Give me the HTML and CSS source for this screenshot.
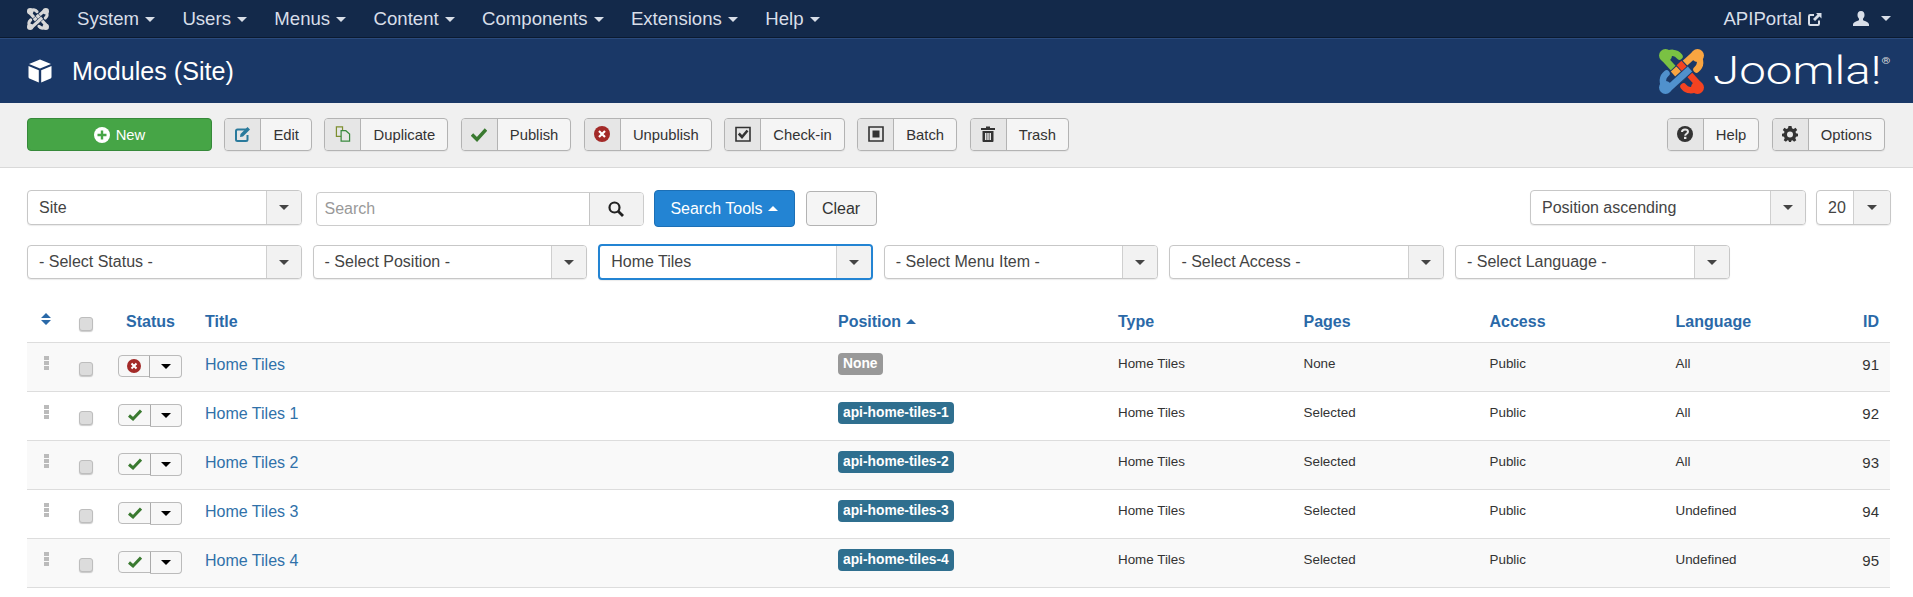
FILE: index.html
```html
<!DOCTYPE html>
<html lang="en">
<head>
<meta charset="utf-8">
<title>Modules (Site)</title>
<link rel="stylesheet" href="styles.css">
</head>
<body>
<svg class="defs" width="0" height="0" aria-hidden="true">
  <symbol id="piece" viewBox="0 0 45 45">
    <path class="pc-hook" d="M7 7 C11 2.500 17 3 20.500 7.500"/>
    <path class="pc-gap" d="M9 14 L25 31"/>
    <path class="pc-band" d="M5 9 L25 31"/>
    <circle class="pc-dot" cx="6.500" cy="6.500" r="6.500"/>
  </symbol>
</svg>
<nav class="topnav">
  <svg class="navlogo" viewBox="0 0 45 45">
    <g class="logo-white">
      <use href="#piece"/>
      <use href="#piece" transform="rotate(90 22.5 22.5)"/>
      <use href="#piece" transform="rotate(180 22.5 22.5)"/>
      <use href="#piece" transform="rotate(270 22.5 22.5)"/>
    </g>
  </svg>
  <ul class="navmenu">
    <li>System<i class="caret"></i></li>
    <li>Users<i class="caret"></i></li>
    <li>Menus<i class="caret"></i></li>
    <li>Content<i class="caret"></i></li>
    <li>Components<i class="caret"></i></li>
    <li>Extensions<i class="caret"></i></li>
    <li>Help<i class="caret"></i></li>
  </ul>
  <div class="navright">
    <span class="portal">APIPortal
      <svg class="exticon" viewBox="0 0 14 14"><path d="M6 3H2.2C1.5 3 1 3.500 1 4.200V11.800C1 12.500 1.500 13 2.200 13H9.800C10.500 13 11 12.500 11 11.800V8.500" fill="none" stroke="currentColor" stroke-width="2"/><path d="M8 1H13.500V6.500L11.500 4.500L7 9L5 7L9.500 2.500Z" fill="currentColor"/></svg>
    </span>
    <svg class="usericon" viewBox="0 0 16 15"><path d="M8 0C5.500 0 4.300 2 4.500 4.300C4.600 6 5.300 7 6 7.800V9.300C4 10.300 0.500 10.800 0 13.500V15H16V13.500C15.500 10.800 12 10.300 10 9.300V7.800C10.700 7 11.400 6 11.500 4.300C11.700 2 10.500 0 8 0Z" fill="currentColor"/></svg>
    <i class="caret"></i>
  </div>
</nav>
<header class="titlebar">
  <svg class="cube" viewBox="0 0 24 24"><path d="M12 0.500L23 5L12 9.500L1 5Z M0.500 7L10.800 11.200V23.500L2 19.800C1 19.400 0.500 18.800 0.500 17.800Z M23.500 7V17.800C23.500 18.800 23 19.400 22 19.800L13.200 23.500V11.200Z" fill="#fff"/></svg>
  <h1 class="pagetitle">Modules (Site)</h1>
  <div class="brand">
    <svg class="brandmark" viewBox="0 0 45 45">
      <use class="pc-green" href="#piece"/>
      <use class="pc-orange" href="#piece" transform="rotate(90 22.5 22.5)"/>
      <use class="pc-red" href="#piece" transform="rotate(180 22.5 22.5)"/>
      <use class="pc-blue" href="#piece" transform="rotate(270 22.5 22.5)"/>
    </svg>
    <span class="wordmark">Joomla!<sup class="reg">®</sup></span>
  </div>
</header>
<div class="toolbar">
  <button class="btn-new"><svg class="newicon" viewBox="0 0 16 16"><circle cx="8" cy="8" r="8" fill="#fff"/><path d="M8 3.500V12.500M3.500 8H12.500" stroke="#46a546" stroke-width="2.400"/></svg>New</button>
  <div class="tbtn"><span class="tico"><svg viewBox="0 0 16 16"><path d="M12 3.500H2.500C1.700 3.500 1 4.200 1 5V13.500C1 14.300 1.700 15 2.500 15H11C11.800 15 12.500 14.300 12.500 13.500V9" fill="none" stroke="#2a7a9c" stroke-width="2"/><path d="M5.500 8L12.500 1L15 3.500L8 10.500L5 11Z" fill="#2a7a9c"/></svg></span><span class="tlabel">Edit</span></div>
  <div class="tbtn"><span class="tico"><svg viewBox="0 0 16 17"><path d="M1 1H7.500V11H1Z" fill="none" stroke="#7d8f2f" stroke-width="1.300"/><path d="M6 5H11L15 8.500V16H6Z" fill="#e6e6e6" stroke="#3a8a3f" stroke-width="1.300"/></svg></span><span class="tlabel">Duplicate</span></div>
  <div class="tbtn"><span class="tico"><svg viewBox="0 0 16 14"><path d="M1 7.500L6 12.500L15 2.500" fill="none" stroke="#3a7a30" stroke-width="3.400"/></svg></span><span class="tlabel">Publish</span></div>
  <div class="tbtn"><span class="tico"><svg viewBox="0 0 16 16"><circle cx="8" cy="8" r="8" fill="#a32a28"/><path d="M5 5L11 11M11 5L5 11" stroke="#fff" stroke-width="2.200"/></svg></span><span class="tlabel">Unpublish</span></div>
  <div class="tbtn"><span class="tico"><svg viewBox="0 0 16 16"><path d="M1 1.500H15V15H1Z" fill="none" stroke="#333" stroke-width="1.600"/><path d="M3.800 7.500L7 11L12.500 4.500" fill="none" stroke="#333" stroke-width="2.600"/></svg></span><span class="tlabel">Check-in</span></div>
  <div class="tbtn"><span class="tico"><svg viewBox="0 0 16 16"><path d="M1 1H15V15H1Z" fill="none" stroke="#333" stroke-width="1.600"/><rect x="4.500" y="4.500" width="7" height="7" fill="#333"/></svg></span><span class="tlabel">Batch</span></div>
  <div class="tbtn"><span class="tico"><svg viewBox="0 0 16 16"><path d="M6 0.500H10V2H15V4H1V2H6Z" fill="#333"/><path d="M2.500 5H13.500V15C13.500 15.600 13 16 12.500 16H3.500C3 16 2.500 15.600 2.500 15Z M5 7V14H6.500V7Z M7.250 7V14H8.750V7Z M9.500 7V14H11V7Z" fill="#333" fill-rule="evenodd"/></svg></span><span class="tlabel">Trash</span></div>
  <div class="tbtn push"><span class="tico"><svg viewBox="0 0 16 16"><circle cx="8" cy="8" r="8" fill="#333"/><path d="M5 6C5 4.200 6.500 3.400 8 3.400C9.700 3.400 11 4.300 11 5.800C11 7.800 8.200 7.700 8.200 9.700" fill="none" stroke="#e6e6e6" stroke-width="2"/><rect x="7" y="10.800" width="2.400" height="2.200" fill="#e6e6e6"/></svg></span><span class="tlabel">Help</span></div>
  <div class="tbtn"><span class="tico"><svg viewBox="0 0 16 16"><path fill-rule="evenodd" fill="#333" d="M6.500 0H9.500L10 2.300L11.600 3L13.600 1.800L15.200 4.100L13.500 5.700L14 7.200L16 7.800V10.200L14 10.800L13.300 12.300L14.300 14.300L12.100 15.800L10.500 14.300L9.500 14.600L9 16H7L6.500 14.600L5.500 14.300L3.900 15.800L1.700 14.300L2.700 12.300L2 10.800L0 10.200V7.800L2 7.200L2.500 5.700L0.800 4.100L2.400 1.800L4.400 3L6 2.300Z M8 5.500A3 3 0 1 0 8 11.500A3 3 0 1 0 8 5.500Z"/></svg></span><span class="tlabel">Options</span></div>
</div>
<main class="content">
  <div class="filterbar">
    <div class="select w-site"><span class="val">Site</span><span class="arrow"><i class="caret dark"></i></span></div>
    <div class="searchbox">
      <span class="searchinput">Search</span>
      <span class="searchbtn"><svg viewBox="0 0 16 16"><circle cx="6.500" cy="6.500" r="5" fill="none" stroke="#222" stroke-width="2.200"/><path d="M10.200 10.200L15 15" stroke="#222" stroke-width="2.800"/></svg></span>
    </div>
    <button class="btn-tools">Search Tools<i class="caret up"></i></button>
    <button class="btn-clear">Clear</button>
    <div class="select w-sort push"><span class="val">Position ascending</span><span class="arrow"><i class="caret dark"></i></span></div>
    <div class="select w-limit"><span class="val">20</span><span class="arrow"><i class="caret dark"></i></span></div>
  </div>
  <div class="filterrow">
    <div class="select"><span class="val">- Select Status -</span><span class="arrow"><i class="caret dark"></i></span></div>
    <div class="select"><span class="val">- Select Position -</span><span class="arrow"><i class="caret dark"></i></span></div>
    <div class="select focused"><span class="val">Home Tiles</span><span class="arrow"><i class="caret dark"></i></span></div>
    <div class="select"><span class="val">- Select Menu Item -</span><span class="arrow"><i class="caret dark"></i></span></div>
    <div class="select"><span class="val">- Select Access -</span><span class="arrow"><i class="caret dark"></i></span></div>
    <div class="select"><span class="val">- Select Language -</span><span class="arrow"><i class="caret dark"></i></span></div>
  </div>
  <table class="list">
    <colgroup>
      <col class="c-sort"><col class="c-check"><col class="c-status"><col class="c-title"><col class="c-pos"><col class="c-type"><col class="c-pages"><col class="c-access"><col class="c-lang"><col class="c-id">
    </colgroup>
    <thead>
      <tr>
        <th><svg class="sorticon" viewBox="0 0 10 12"><path d="M5 0L10 5H0Z M0 7H10L5 12Z" fill="#2a69a8"/></svg></th>
        <th><input class="cb" type="checkbox"></th>
        <th class="ctr">Status</th>
        <th>Title</th>
        <th>Position<i class="caret up blue"></i></th>
        <th>Type</th>
        <th>Pages</th>
        <th>Access</th>
        <th>Language</th>
        <th class="right">ID</th>
      </tr>
    </thead>
    <tbody>
      <tr>
        <td class="dragcell"><svg class="drag" viewBox="0 0 5 14"><path d="M0 0H5V4H0Z M0 5H5V9H0Z M0 10H5V14H0Z" fill="#bbb"/></svg></td>
        <td class="checkcell"><input class="cb" type="checkbox"></td>
        <td class="statuscell"><div class="status"><span class="st-main wide"><svg viewBox="0 0 14 14"><circle cx="7" cy="7" r="7" fill="#a32a28"/><path d="M4.500 4.500L9.500 9.500M9.500 4.500L4.500 9.500" stroke="#fff" stroke-width="2"/></svg></span><span class="st-drop"><i class="caret black"></i></span></div></td>
        <td class="titlecell"><a class="tlink">Home Tiles</a></td>
        <td class="badgecell"><span class="badge none">None</span></td>
        <td class="sm">Home Tiles</td><td class="sm">None</td><td class="sm">Public</td><td class="sm">All</td><td class="idcell">91</td>
      </tr>
      <tr>
        <td class="dragcell"><svg class="drag" viewBox="0 0 5 14"><path d="M0 0H5V4H0Z M0 5H5V9H0Z M0 10H5V14H0Z" fill="#bbb"/></svg></td>
        <td class="checkcell"><input class="cb" type="checkbox"></td>
        <td class="statuscell"><div class="status"><span class="st-main"><svg viewBox="0 0 14 12"><path d="M1 6.500L5 10L13 1.500" fill="none" stroke="#3a7a30" stroke-width="3"/></svg></span><span class="st-drop"><i class="caret black"></i></span></div></td>
        <td class="titlecell"><a class="tlink">Home Tiles 1</a></td>
        <td class="badgecell"><span class="badge">api-home-tiles-1</span></td>
        <td class="sm">Home Tiles</td><td class="sm">Selected</td><td class="sm">Public</td><td class="sm">All</td><td class="idcell">92</td>
      </tr>
      <tr>
        <td class="dragcell"><svg class="drag" viewBox="0 0 5 14"><path d="M0 0H5V4H0Z M0 5H5V9H0Z M0 10H5V14H0Z" fill="#bbb"/></svg></td>
        <td class="checkcell"><input class="cb" type="checkbox"></td>
        <td class="statuscell"><div class="status"><span class="st-main"><svg viewBox="0 0 14 12"><path d="M1 6.500L5 10L13 1.500" fill="none" stroke="#3a7a30" stroke-width="3"/></svg></span><span class="st-drop"><i class="caret black"></i></span></div></td>
        <td class="titlecell"><a class="tlink">Home Tiles 2</a></td>
        <td class="badgecell"><span class="badge">api-home-tiles-2</span></td>
        <td class="sm">Home Tiles</td><td class="sm">Selected</td><td class="sm">Public</td><td class="sm">All</td><td class="idcell">93</td>
      </tr>
      <tr>
        <td class="dragcell"><svg class="drag" viewBox="0 0 5 14"><path d="M0 0H5V4H0Z M0 5H5V9H0Z M0 10H5V14H0Z" fill="#bbb"/></svg></td>
        <td class="checkcell"><input class="cb" type="checkbox"></td>
        <td class="statuscell"><div class="status"><span class="st-main"><svg viewBox="0 0 14 12"><path d="M1 6.500L5 10L13 1.500" fill="none" stroke="#3a7a30" stroke-width="3"/></svg></span><span class="st-drop"><i class="caret black"></i></span></div></td>
        <td class="titlecell"><a class="tlink">Home Tiles 3</a></td>
        <td class="badgecell"><span class="badge">api-home-tiles-3</span></td>
        <td class="sm">Home Tiles</td><td class="sm">Selected</td><td class="sm">Public</td><td class="sm">Undefined</td><td class="idcell">94</td>
      </tr>
      <tr>
        <td class="dragcell"><svg class="drag" viewBox="0 0 5 14"><path d="M0 0H5V4H0Z M0 5H5V9H0Z M0 10H5V14H0Z" fill="#bbb"/></svg></td>
        <td class="checkcell"><input class="cb" type="checkbox"></td>
        <td class="statuscell"><div class="status"><span class="st-main"><svg viewBox="0 0 14 12"><path d="M1 6.500L5 10L13 1.500" fill="none" stroke="#3a7a30" stroke-width="3"/></svg></span><span class="st-drop"><i class="caret black"></i></span></div></td>
        <td class="titlecell"><a class="tlink">Home Tiles 4</a></td>
        <td class="badgecell"><span class="badge">api-home-tiles-4</span></td>
        <td class="sm">Home Tiles</td><td class="sm">Selected</td><td class="sm">Public</td><td class="sm">Undefined</td><td class="idcell">95</td>
      </tr>
    </tbody>
  </table>
</main>
</body>
</html>
```
FILE: styles.css
```css
* { box-sizing: border-box; }
html, body { margin: 0; padding: 0; }
body {
  font-family: "Liberation Sans", Arial, sans-serif;
  font-size: 16px;
  color: #333;
  background: #fff;
  overflow: hidden;
}
.defs { position: absolute; }
.caret {
  display: inline-block;
  width: 0;
  height: 0;
  margin-left: 6px;
  vertical-align: middle;
  border-left: 5px solid transparent;
  border-right: 5px solid transparent;
  border-top: 5px solid currentColor;
}
.caret.up { border-top: 0; border-bottom: 5px solid currentColor; }
.caret.dark { margin: 0; color: #444; }
.caret.black { margin: 0; color: #000; }
.caret.blue { color: #2a69a8; }

/* top navigation */
.topnav {
  height: 38px;
  display: flex;
  align-items: center;
  padding: 0 22px 0 27px;
  background: #13294a;
  border-bottom: 1px solid #0b1a30;
  color: #d8dee8;
  font-size: 18.6px;
}
.navlogo { width: 22px; height: 22px; margin-right: 28px; }
.logo-white { --band: #d8d8d8; --gap: #13294a; }
.navmenu {
  list-style: none;
  margin: 0;
  padding: 0;
  display: flex;
  gap: 27.4px;
}
.navright {
  margin-left: auto;
  display: flex;
  align-items: center;
}
.portal { display: flex; align-items: center; gap: 6px; }
.exticon { width: 14px; height: 14px; }
.usericon { width: 16px; height: 15px; margin-left: 31px; }
.navright .caret { margin-left: 12px; }

/* logo pieces */
.pc-band { fill: none; stroke: var(--band, #fff); stroke-width: 6.5; }
.pc-hook { fill: none; stroke: var(--band, #fff); stroke-width: 6.5; stroke-linecap: round; }
.pc-gap { fill: none; stroke: var(--gap, #1a3867); stroke-width: 8.5; }
.pc-dot { fill: var(--band, #fff); }
.pc-green { --band: #7ac143; }
.pc-orange { --band: #f9a541; }
.pc-red { --band: #f44321; }
.pc-blue { --band: #5091cd; }

/* title bar */
.titlebar {
  height: 65px;
  display: flex;
  align-items: center;
  padding: 0 28px;
  background: #1a3867;
  border-top: 1px solid #2b4a7c;
}
.cube { width: 24px; height: 24px; margin-right: 20px; }
.pagetitle {
  margin: 0;
  font-size: 25.1px;
  font-weight: 400;
  color: #fff;
}
.brand { margin-left: auto; display: flex; align-items: center; }
.brandmark { width: 45px; height: 45px; margin-right: 9px; }
.wordmark {
  display: block;
  width: 172px;
  font-family: Roboto, sans-serif;
  font-weight: 300;
  font-size: 38px;
  line-height: 38px;
  color: #fff;
  white-space: nowrap;
  transform: scaleX(1.25);
  transform-origin: left center;
}
.reg { font-size: 9px; vertical-align: 20px; line-height: 0; font-weight: 400; color: #ddd; }

/* toolbar */
.toolbar {
  height: 65px;
  display: flex;
  align-items: flex-start;
  gap: 12.3px;
  padding: 15px 28px 0 27px;
  background: #f0f0f0;
  border-bottom: 1px solid #d9d9d9;
}
.btn-new {
  width: 185px;
  height: 33px;
  margin: 0;
  padding: 0;
  display: flex;
  align-items: center;
  justify-content: center;
  gap: 6px;
  border: 1px solid #36893a;
  border-radius: 4px;
  background: #46a546;
  color: #fff;
  font: 14.8px "Liberation Sans", Arial, sans-serif;
}
.newicon { width: 16px; height: 16px; }
.tbtn {
  height: 33px;
  display: flex;
  border: 1px solid #b3b3b3;
  border-radius: 4px;
  background: #f5f5f5;
  font-size: 14.8px;
  box-shadow: 0 1px 1px rgba(0,0,0,.05);
}
.tico {
  width: 36px;
  display: flex;
  align-items: center;
  justify-content: center;
  padding-bottom: 2px;
  background: #e6e6e6;
  border-right: 1px solid #b3b3b3;
  border-radius: 3px 0 0 3px;
}
.tico svg { width: 16px; height: 16px; }
.tlabel {
  padding: 0 12.15px;
  line-height: 32px;
  color: #333;
}
.push { margin-left: auto; }

/* filters */
.content { padding: 22px 22px 0 27px; }
.filterbar { display: flex; align-items: flex-start; height: 35px; }
.filterrow { display: flex; gap: 11px; margin-top: 20px; }
.select {
  width: 274.5px;
  height: 35px;
  display: flex;
  flex: none;
  border: 1px solid #c7c7c7;
  border-radius: 4px;
  background: #fff;
  box-shadow: 0 1px 1px rgba(0,0,0,.08);
}
.filterrow .select { width: 274.6px; height: 34px; }
.val {
  flex: 1;
  padding-left: 11px;
  line-height: 33px;
  color: #444;
  white-space: nowrap;
}
.filterrow .val { line-height: 31px; }
.arrow {
  width: 35px;
  display: flex;
  align-items: center;
  justify-content: center;
  background: #f2f2f2;
  border-left: 1px solid #cfcfcf;
  border-radius: 0 3px 3px 0;
}
.filterrow .select.focused {
  height: 36px;
  margin-top: -1px;
  border: 2px solid #2384d3;
}
.w-sort { width: 276px; margin-left: auto; }
.w-limit { width: 75px; margin-left: 10px; }
.w-limit .arrow { width: 37px; }
.searchbox {
  width: 328px;
  height: 34px;
  margin: 2px 0 0 14px;
  display: flex;
  border: 1px solid #ccc;
  border-radius: 4px;
}
.searchinput { flex: 1; padding-left: 8px; line-height: 32px; color: #999; }
.searchbtn {
  width: 54px;
  display: flex;
  align-items: center;
  justify-content: center;
  background: #f2f2f2;
  border-left: 1px solid #c4c4c4;
  border-radius: 0 3px 3px 0;
}
.searchbtn svg { width: 16px; height: 16px; }
.btn-tools {
  width: 141px;
  height: 37px;
  margin: 0 0 0 10px;
  padding: 0;
  border: 1px solid #1c6fb5;
  border-radius: 4px;
  background: #2384d3;
  color: #fff;
  font: 16px "Liberation Sans", Arial, sans-serif;
}
.btn-tools .caret { margin-left: 5px; vertical-align: 3px; }
.btn-clear {
  width: 71px;
  height: 35px;
  margin: 1px 0 0 11px;
  padding: 0;
  border: 1px solid #b3b3b3;
  border-radius: 4px;
  background: #f5f5f5;
  color: #333;
  font: 16px "Liberation Sans", Arial, sans-serif;
}

/* table */
.list {
  width: 1863px;
  margin-top: 20px;
  table-layout: fixed;
  border-collapse: collapse;
}
.c-sort { width: 39px; }
.c-check { width: 41px; }
.c-status { width: 88px; }
.c-title { width: 633px; }
.c-pos { width: 280px; }
.c-type { width: 185.5px; }
.c-pages { width: 186px; }
.c-access { width: 186px; }
.c-lang { width: 175px; }
.c-id { width: 49.5px; }
.list th {
  height: 42px;
  padding: 2px 10px 0;
  text-align: left;
  font-weight: 700;
  color: #2a69a8;
  border-bottom: 1px solid #ddd;
  white-space: nowrap;
}
.list th.ctr { padding: 2px 0 0 19px; }
.list th.right { text-align: right; padding-right: 11px; }
.list th .caret { vertical-align: 3px; margin-left: 5px; }
.sorticon { width: 10px; height: 12px; display: block; margin: 0 0 5px 4px; }
.list td {
  height: 49px;
  padding: 11px 10px 0;
  vertical-align: top;
  border-bottom: 1px solid #ddd;
}
.list tbody tr:nth-child(odd) td { background: #f9f9f9; }
.cb {
  appearance: none;
  display: block;
  width: 14px;
  height: 14px;
  margin: 5px 0 0 3px;
  border: 1px solid #bdbdbd;
  border-radius: 3px;
  background: #dcdcdc;
  box-shadow: 0 1px 1px rgba(0,0,0,.2);
}
.list td.dragcell { padding: 13px 0 0 17px; }
.drag { display: block; width: 5px; height: 14px; }
.list td.checkcell { padding-top: 14px; }
.list td.statuscell { padding: 12px 0 0 11px; }
.status { display: flex; width: 64px; height: 23px; }
.st-main {
  flex: none;
  width: 33px;
  height: 22px;
  display: flex;
  align-items: center;
  justify-content: center;
  border: 1px solid #bbb;
  border-radius: 4px 0 0 4px;
  background: #f7f7f7;
}
.st-main.wide { width: 32px; }
.st-main svg { width: 14px; height: 14px; }
.st-drop {
  flex: 1;
  height: 23px;
  display: flex;
  align-items: center;
  justify-content: center;
  border: 1px solid #bbb;
  border-left-color: #aaa;
  border-radius: 0 4px 4px 0;
  background: #f7f7f7;
  margin-left: -1px;
}
.titlecell { line-height: 21px; }
.tlink { color: #3071a9; }
.list td.badgecell { padding-top: 10px; }
.badge {
  display: inline-block;
  height: 22px;
  padding: 0 5px;
  border-radius: 4px;
  background: #2f6f8f;
  color: #fff;
  font-size: 13.8px;
  font-weight: 700;
  line-height: 22px;
  white-space: nowrap;
}
.badge.none { background: #999; }
.sm { font-size: 13.4px; line-height: 20px; color: #333; }
.idcell { text-align: right; font-size: 15px; line-height: 22px; color: #333; }
.list td.idcell { padding-right: 11px; }
```
